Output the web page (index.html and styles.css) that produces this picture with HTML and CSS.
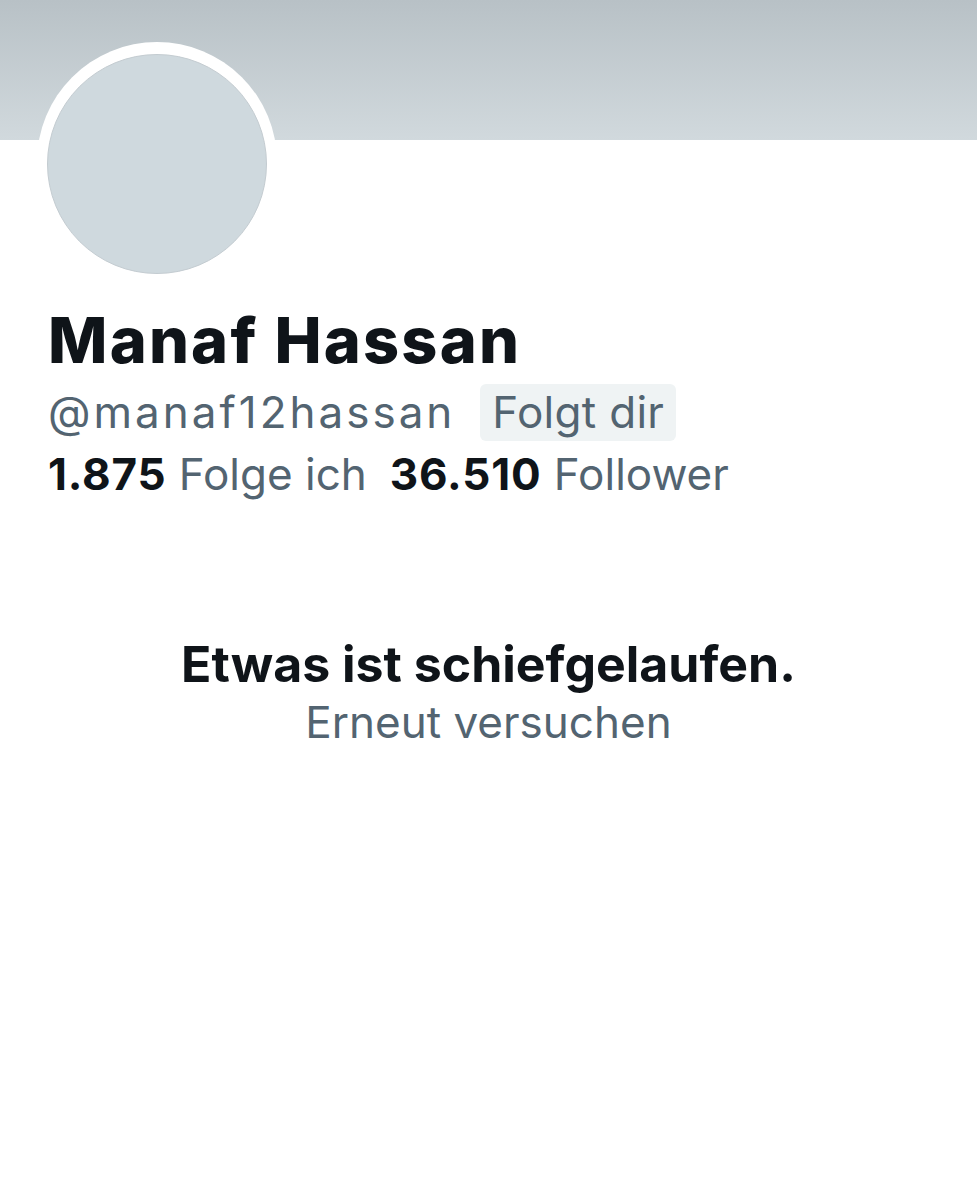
FILE: index.html
```html
<!DOCTYPE html>
<html lang="de">
<head>
<meta charset="utf-8">
<title>Manaf Hassan</title>
<link rel="stylesheet" href="styles.css">
</head>
<body>
<div class="page">
  <div class="banner"></div>
  <div class="profile">
    <div class="avatar-row">
      <div class="avatar-ring"><div class="avatar"></div></div>
    </div>
    <h1 class="name">Manaf Hassan</h1>
    <div class="handle-row">
      <span class="handle">@manaf12hassan</span>
      <span class="badge">Folgt dir</span>
    </div>
    <div class="stats">
      <span class="stat"><b>1.875</b> Folge ich</span>
      <span class="stat"><b>36.510</b> Follower</span>
    </div>
  </div>
  <div class="error">
    <div class="error-title">Etwas ist schiefgelaufen.</div>
    <div class="error-retry">Erneut versuchen</div>
  </div>
</div>
</body>
</html>
```

FILE: styles.css
```css
html, body {
  margin: 0;
  padding: 0;
  background: #ffffff;
}
body {
  font-family: Inter, "Liberation Sans", Arial, sans-serif;
  color: #0f1419;
}
.page {
  width: 977px;
  height: 1200px;
  overflow: hidden;
}
.banner {
  height: 140px;
  background: linear-gradient(#b8c1c6, #d1d9dd);
}
.profile {
  padding: 0 0 0 48px;
}
.avatar-row {
  margin-top: -98px;
  margin-left: -11px;
  height: 240px;
}
.avatar-ring {
  width: 240px;
  height: 240px;
  box-sizing: border-box;
  padding-top: 4px;
  border-radius: 50%;
  background: #ffffff;
  display: flex;
  align-items: center;
  justify-content: center;
}
.avatar {
  width: 218px;
  height: 218px;
  border-radius: 50%;
  background: #cfd9de;
  border: 1px solid #c4ccd1;
}
.name {
  margin: 18px 0 0 0;
  font-size: 63px;
  font-weight: 800;
  line-height: 80px;
  letter-spacing: 2.2px;
}
.handle-row {
  display: flex;
  align-items: center;
  gap: 25px;
  margin-top: 0;
  height: 64px;
}
.handle {
  font-size: 44px;
  color: #536471;
  letter-spacing: 3px;
}
.badge {
  font-size: 44px;
  color: #536471;
  background: #eff3f4;
  border-radius: 6px;
  padding: 1px 12px 2px 12px;
  letter-spacing: 0.3px;
}
.stats {
  display: flex;
  gap: 23px;
  font-size: 44px;
  color: #536471;
  margin-top: 0;
  line-height: 60px;
  letter-spacing: 0;
}
.stats b {
  color: #0f1419;
  font-weight: 700;
  letter-spacing: 0.8px;
}
.error {
  margin-top: 130px;
  text-align: center;
}
.error-title {
  font-size: 50px;
  font-weight: 700;
  line-height: 60px;
}
.error-retry {
  font-size: 44px;
  color: #536471;
  line-height: 56px;
}
```
